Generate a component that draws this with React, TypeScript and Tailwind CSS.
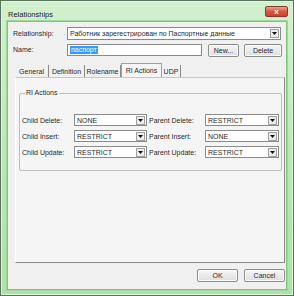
import React from "react";

const font = { fontFamily: '"Liberation Sans", Arial, sans-serif' };

function Arrow() {
  return (
    <div className="flex h-[9px] w-[9px] items-center justify-center border border-[#a0a0a0] bg-[#ededed]">
      <svg width="5" height="3" viewBox="0 0 5 3">
        <path d="M0 0h5L2.5 3z" fill="#111" />
      </svg>
    </div>
  );
}

function Combo({ value, className }: { value: string; className: string }) {
  return (
    <div
      className={`flex h-[12px] items-center justify-between border border-[#8a8a8a] bg-white pl-[2px] pr-[1px] ${className}`}
    >
      <span className="truncate text-[7px] leading-none text-[#2a2a2a]">{value}</span>
      <Arrow />
    </div>
  );
}

function Btn({ label, className }: { label: string; className: string }) {
  return (
    <div
      className={`flex h-[13px] items-center justify-center rounded-[2px] border border-[#8c8c8c] bg-gradient-to-b from-[#f6f6f6] to-[#dedede] text-[7px] leading-none text-[#2a2a2a] shadow-[inset_0_0_0_1px_#fbfbfb] ${className}`}
    >
      {label}
    </div>
  );
}

function RiRow({
  left,
  leftValue,
  right,
  rightValue,
}: {
  left: string;
  leftValue: string;
  right: string;
  rightValue: string;
}) {
  return (
    <div className="flex h-[12px] items-center">
      <span className="w-[52px] text-[7px] leading-none text-[#2a2a2a]">{left}</span>
      <Combo value={leftValue} className="w-[73px]" />
      <span className="ml-[2px] w-[56px] text-[7px] leading-none text-[#2a2a2a]">{right}</span>
      <Combo value={rightValue} className="w-[74px]" />
    </div>
  );
}

const tabs = [
  { label: "General", w: "w-[34px]" },
  { label: "Definition", w: "w-[36px]" },
  { label: "Rolename", w: "w-[36px]" },
  { label: "RI Actions", w: "w-[41px]", active: true },
  { label: "UDP", w: "w-[19px]" },
];

export default function App() {
  return (
    <div
      style={font}
      className="relative h-[296px] w-[294px] overflow-hidden bg-gradient-to-b from-[#d3f0cf] via-[#bde7b7] to-[#aee1a7] pl-[7px] pr-[7px] pt-[21px] shadow-[inset_0_0_0_1px_#5a735c,inset_0_0_0_2px_#e0f5dc]"
    >
      {/* title bar */}
      <div className="absolute left-[8px] top-[11px] text-[7.5px] leading-none text-[#1a1a1a]">
        Relationships
      </div>
      <div className="absolute left-[265px] top-[6px] flex h-[11px] w-[23px] items-center justify-center rounded-[2px] border border-[#8a3a2a] bg-gradient-to-b from-[#eaa48e] via-[#d6583c] to-[#c9452b]">
        <span className="text-[8px] font-bold leading-none text-white">x</span>
      </div>

      {/* client area */}
      <div className="flex h-[269px] w-[280px] flex-col border border-[#78c874] bg-[#f0f0f0] shadow-[0_0_0_1px_#9fd99a]">
        <div className="ml-[5px] mt-[5px] flex h-[13px] items-center">
          <span className="w-[54px] text-[7px] leading-none text-[#2a2a2a]">Relationship:</span>
          <Combo
            value="Работник зарегестрирован по Паспортные данные"
            className="h-[13px] w-[214px]"
          />
        </div>
        <div className="ml-[5px] mt-[3px] flex h-[13px] items-center">
          <span className="w-[54px] text-[7px] leading-none text-[#2a2a2a]">Name:</span>
          <div className="flex h-[12px] w-[135px] items-center border border-[#8a8a8a] bg-white pl-[2px]">
            <span className="bg-[#3399ff] px-[1px] text-[7px] leading-[8px] text-white">паспорт</span>
          </div>
          <Btn label="New..." className="ml-[6px] mt-[2px] w-[31px]" />
          <Btn label="Delete" className="ml-[5px] mt-[2px] w-[38px]" />
        </div>

        {/* tabs */}
        <div className="ml-[7px] mt-[7px] flex h-[14px] items-end">
          {tabs.map((t) =>
            t.active ? (
              <div
                key={t.label}
                className={`flex h-[14px] items-center justify-center border-x border-t border-[#a0a0a0] bg-[#f5f5f5] text-[7px] leading-none text-[#2a2a2a] ${t.w}`}
              >
                {t.label}
              </div>
            ) : (
              <div
                key={t.label}
                className={`flex h-[12px] items-center justify-center border-r border-[#8a8a8a] text-[7px] leading-none text-[#2a2a2a] ${t.w}`}
              >
                {t.label}
              </div>
            ),
          )}
        </div>

        {/* tab panel */}
        <div className="ml-[7px] flex h-[186px] w-[270px] flex-col border-b border-r border-[#8a8a8a] border-t border-t-[#c8c8c8] border-l border-l-white bg-[#f5f5f5]">
          <div className="relative ml-[3px] mt-[15px] h-[78px] w-[263px] rounded-[2px] border border-[#bdbdbd]">
            <span className="absolute -top-[5px] left-[5px] bg-[#f5f5f5] px-[1px] text-[7px] leading-none text-[#2a2a2a]">
              RI Actions
            </span>
            <div className="ml-[2px] mt-[20px] flex flex-col gap-[4px]">
              <RiRow left="Child Delete:" leftValue="NONE" right="Parent Delete:" rightValue="RESTRICT" />
              <RiRow left="Child Insert:" leftValue="RESTRICT" right="Parent Insert:" rightValue="NONE" />
              <RiRow left="Child Update:" leftValue="RESTRICT" right="Parent Update:" rightValue="RESTRICT" />
            </div>
          </div>
        </div>

        {/* footer buttons */}
        <div className="mt-[6px] flex justify-end gap-[6px] pr-[1px]">
          <Btn label="OK" className="w-[41px]" />
          <Btn label="Cancel" className="w-[41px]" />
        </div>
      </div>
    </div>
  );
}
